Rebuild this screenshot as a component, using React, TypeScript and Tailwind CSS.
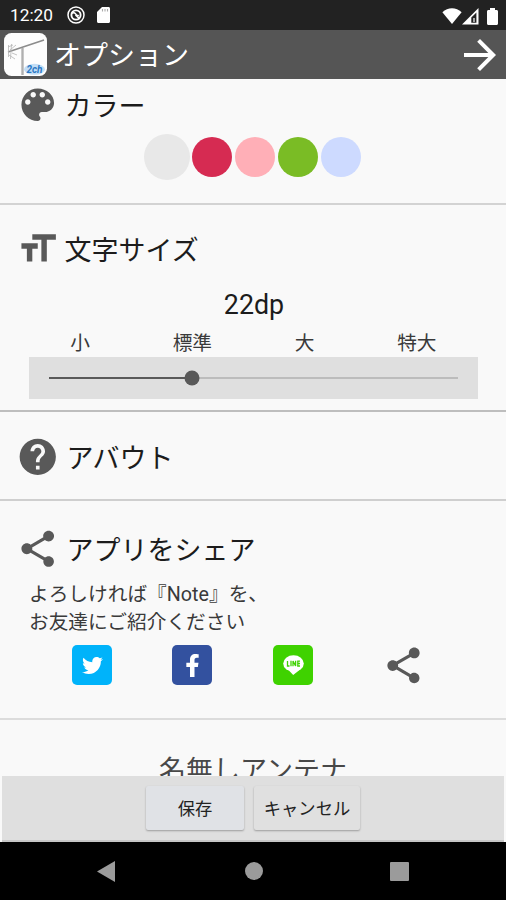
import {useState} from 'react';
import type {ReactNode} from 'react';
import {MdArrowForward, MdFormatSize, MdHelp, MdShare} from 'react-icons/md';
import {FaFacebookF, FaTwitter} from 'react-icons/fa';

const COLORS = ['bg-[#e8e8e8]', 'bg-[#d62b52]', 'bg-[#ffafb7]', 'bg-[#7abc25]', 'bg-[#cddaff]'];
const SIZES = ['小', '標準', '大', '特大'];

function StatusBar() {
    return (
        <div className="h-[30px] shrink-0 bg-[#222] text-white flex items-center justify-between pl-[10px] pr-[8px]">
            <div className="flex items-center">
                <span className="w-[45px] text-[17.3px] leading-none whitespace-nowrap pt-[2px]">12:20</span>
                <svg className="w-[18px] h-[18px] ml-[12px] mt-px" viewBox="0 0 18 18" fill="none" stroke="currentColor">
                    <circle cx="9" cy="9" r="8" strokeWidth="1.5"/>
                    <circle cx="9" cy="9" r="4.6" strokeWidth="1.9"/>
                    <path d="M5 7.500c1.500-1.400 3-.8 4 .8s2 1.300 2.600.6M8.500 8.800l4.200 4" strokeWidth="1.6"/>
                </svg>
                <svg className="w-[13px] h-[16px] ml-[12px] mt-px" viewBox="0 0 13 16">
                    <path d="M5 0h6.500C12.400 0 13 .6 13 1.500v13c0 .9-.6 1.500-1.500 1.500h-10C.6 16 0 15.400 0 14.500V5z" fill="#fff"/>
                    <path d="M5.500 2v2.600M8 2v2.600M10.500 2v2.600" stroke="#aaa" strokeWidth="1.100"/>
                </svg>
            </div>
            <div className="flex items-center pt-[2px]">
                <svg className="w-[20px] h-[16px]" viewBox="0 0 20 16" fill="currentColor">
                    <path d="M10 16 .4 4.300C3.200 1.600 6.500.300 10 .300s6.800 1.300 9.600 4z"/>
                </svg>
                <svg className="w-[17px] h-[17px]" viewBox="0 0 17 17">
                    <path d="M0 16.500 16.500 0v16.500z" fill="#fff"/>
                    <path d="M9.300 9.600 14.400 4.500v10.200H9.300z" fill="#222"/>
                    <path d="M12 10v4" stroke="#fff" strokeWidth="1.200"/>
                </svg>
                <svg className="w-[11px] h-[17px] ml-[8px]" viewBox="0 0 11 17" fill="currentColor">
                    <path d="M3 0h5v2h1.500c.9 0 1.500.6 1.500 1.500v12c0 .9-.6 1.500-1.500 1.500h-8C.6 17 0 16.400 0 15.500v-12C0 2.600.6 2 1.500 2H3z"/>
                </svg>
            </div>
        </div>
    );
}

function AppIcon() {
    return (
        <svg className="w-[43px] h-[43px]" viewBox="0 0 43 43">
            <rect width="43" height="43" rx="7.500" fill="#fdfdfd"/>
            <g stroke="#8c8c8c" fill="none">
                <path d="M4 19 40 7" strokeWidth="1.500"/>
                <path d="M18.500 15v27" stroke="#b0b0b0" strokeWidth="2.400"/>
                <path d="M4.500 12v12M7.500 11l-1 15M4 14l5-2M6 17l6-5M5 22l6 4M8 20l5 2" strokeWidth=".8" stroke="#b5b5b5"/>
            </g>
            <ellipse cx="30.500" cy="36.300" rx="10.500" ry="5.500" fill="#c3def6"/>
            <text x="30.500" y="40" textAnchor="middle" fontSize="10" fontWeight="700" fontStyle="italic"
                  fill="#2c78c4">2ch
            </text>
        </svg>
    );
}

function PaletteIcon() {
    return (
        <svg className="w-[1em] h-[1em]" viewBox="0 0 24 24" fill="currentColor">
            <path d="M12 3c-4.970 0-9 4.030-9 9s4.030 9 9 9c.83 0 1.500-.67 1.500-1.500 0-.39-.15-.74-.39-1.010-.23-.26-.38-.61-.38-.99 0-.83.67-1.500 1.500-1.500H16c2.760 0 5-2.240 5-5 0-4.420-4.030-8-9-8zm-5.500 9c-.83 0-1.500-.67-1.500-1.500S5.670 9 6.500 9 8 9.670 8 10.500 7.330 12 6.500 12zm3-4C8.670 8 8 7.330 8 6.500S8.670 5 9.500 5s1.500.67 1.500 1.500S10.330 8 9.500 8zm5 0c-.83 0-1.500-.67-1.500-1.500S13.670 5 14.500 5s1.500.67 1.500 1.500S15.330 8 14.500 8zm3 4c-.83 0-1.500-.67-1.500-1.500S16.670 9 17.500 9s1.500.67 1.500 1.500-.67 1.500-1.500 1.500z"/>
        </svg>
    );
}

function Heading({icon, gap, children}: { icon: ReactNode; gap: string; children: ReactNode }) {
    return (
        <h2 className={`flex items-center h-[43px] pl-[16px] text-[27px] leading-none text-[#1c1c1c] ${gap}`}>
            <span className="text-[#595959] text-[43.5px]">{icon}</span>
            <span className="pt-[5px]">{children}</span>
        </h2>
    );
}

export default function App() {
    const [color, setColor] = useState(0);
    const [progress] = useState(35);

    return (
        <div
            className="w-[506px] h-[900px] flex flex-col overflow-hidden bg-[#f9f9f9] font-['Roboto','Noto_Sans_CJK_JP',sans-serif]">
            <StatusBar/>

            <header className="h-[49px] shrink-0 bg-[#555] text-white flex items-center pl-[4px] pr-[2px]">
                <AppIcon/>
                <h1 className="ml-[7px] flex-1 pt-[4px] text-[27px] leading-none">オプション</h1>
                <MdArrowForward className="w-[48px] h-[48px]"/>
            </header>

            <main className="flex-1 min-h-0 overflow-hidden">
                {/* color */}
                <section className="h-[126px] pt-[4px] border-b-2 border-[#d3d3d3]">
                    <Heading gap="gap-[5px]" icon={<PaletteIcon/>}>カラー</Heading>
                    <div className="mt-[7px] h-[47px] pr-[1px] flex items-center justify-center gap-[3px]">
                        {COLORS.map((c, i) => (
                            <button key={c} type="button" onClick={() => setColor(i)}
                                    className={`rounded-full ${c} ${i === color ? 'w-[46px] h-[46px] -mr-px' : 'w-[40px] h-[40px]'}`}/>
                        ))}
                    </div>
                </section>

                {/* font size */}
                <section className="h-[207px] pt-[22px] border-b-2 border-[#bebebe]">
                    <Heading gap="gap-[5px]" icon={<MdFormatSize/>}>文字サイズ</Heading>
                    <p className="mt-[19px] h-[32px] text-center text-[26.8px] leading-[32px] text-[#1c1c1c] pl-[2px]">22dp</p>
                    <div className="ml-[24px] mt-[10px] w-[449px] h-[26px] grid grid-cols-4 text-center text-[19.7px] leading-[26px] text-[#3a3a3a]">
                        {SIZES.map((s) => <span key={s}>{s}</span>)}
                    </div>
                    <div className="ml-[29px] w-[449px] h-[42px] bg-[#dfdfdf] px-[20px] flex items-center">
                        <div className="relative w-full h-[2px] bg-[#bcbcbc]">
                            <div className="h-[2px] bg-[#595959]" style={{width: `${progress}%`}}/>
                            <div className="absolute top-1/2 w-[15px] h-[15px] rounded-full bg-[#595959] -translate-x-1/2 -translate-y-1/2"
                                 style={{left: `${progress}%`}}/>
                        </div>
                    </div>
                </section>

                {/* about */}
                <section className="h-[89px] pt-[23px] border-b-2 border-[#cfcfcf]">
                    <Heading gap="gap-[7px]" icon={<MdHelp/>}>アバウト</Heading>
                </section>

                {/* share */}
                <section className="h-[219px] pt-[26px] border-b-2 border-[#dcdcdc]">
                    <Heading gap="gap-[7px]" icon={<MdShare/>}>アプリをシェア</Heading>
                    <p className="ml-[29px] mt-[11px] text-[19.7px] leading-[28px] text-[#3a3a3a]">
                        よろしければ『Note』を、<br/>お友達にご紹介ください
                    </p>
                    <div className="mt-[8px] ml-[72px] h-[40px] flex items-center">
                        <button type="button"
                                className="w-[40px] h-[40px] rounded-[5px] bg-[#00b3fa] text-white flex items-center justify-center">
                            <FaTwitter className="w-[21px] h-[21px]"/>
                        </button>
                        <button type="button"
                                className="ml-[60px] w-[40px] h-[40px] rounded-[5px] bg-[#33519f] text-white flex items-center justify-center">
                            <FaFacebookF className="w-[23px] h-[23px]"/>
                        </button>
                        <button type="button"
                                className="ml-[61px] w-[40px] h-[40px] rounded-[5px] bg-[#3fd200] flex items-center justify-center">
                            <svg className="w-[21px] h-[20px]" viewBox="0 0 21 20">
                                <ellipse cx="10.500" cy="8.500" rx="10.300" ry="8.300" fill="#fff"/>
                                <path d="M6 15.500 10.200 20l6.300-5z" fill="#fff"/>
                                <path d="M4.500 6v5h2M8 5.800v5.400M10 11.200V6l2.600 5V5.800M17 6.200h-2.200v4.800H17M14.800 8.500H17"
                                      fill="none" stroke="#3fd200" strokeWidth="1.300"/>
                            </svg>
                        </button>
                        <MdShare className="ml-[69px] w-[43px] h-[43px] text-[#595959]"/>
                    </div>
                </section>

                <p className="pt-[31px] text-center text-[27px] leading-[40px] text-[#484848]">名無しアンテナ</p>
            </main>

            {/* bottom buttons */}
            <footer
                className="h-[66px] shrink-0 mx-[2px] pt-[10px] bg-[#dfdfdf] border-b-2 border-[#c6c6c6] flex justify-center gap-[10px] text-[17.3px] text-[#222]">
                <button type="button" className="w-[98px] h-[44px] pt-[3px] rounded-[2px] bg-[#e0e2e6] shadow-[0_1px_2px_rgba(0,0,0,0.3)]">保存</button>
                <button type="button" className="w-[106px] h-[44px] pt-[3px] rounded-[2px] bg-[#e0e0e0] shadow-[0_1px_2px_rgba(0,0,0,0.3)]">キャンセル</button>
            </footer>

            <nav className="h-[58px] shrink-0 bg-black flex items-center">
                <svg className="ml-[97px] w-[18px] h-[21px]" viewBox="0 0 18 21" fill="#9b9b9b">
                    <path d="M0 10.500 18 0v21z"/>
                </svg>
                <div className="ml-[130px] w-[18px] h-[18px] rounded-full bg-[#9b9b9b]"/>
                <div className="ml-[127px] w-[19px] h-[19px] rounded-[1px] bg-[#9b9b9b]"/>
            </nav>
        </div>
    );
}
